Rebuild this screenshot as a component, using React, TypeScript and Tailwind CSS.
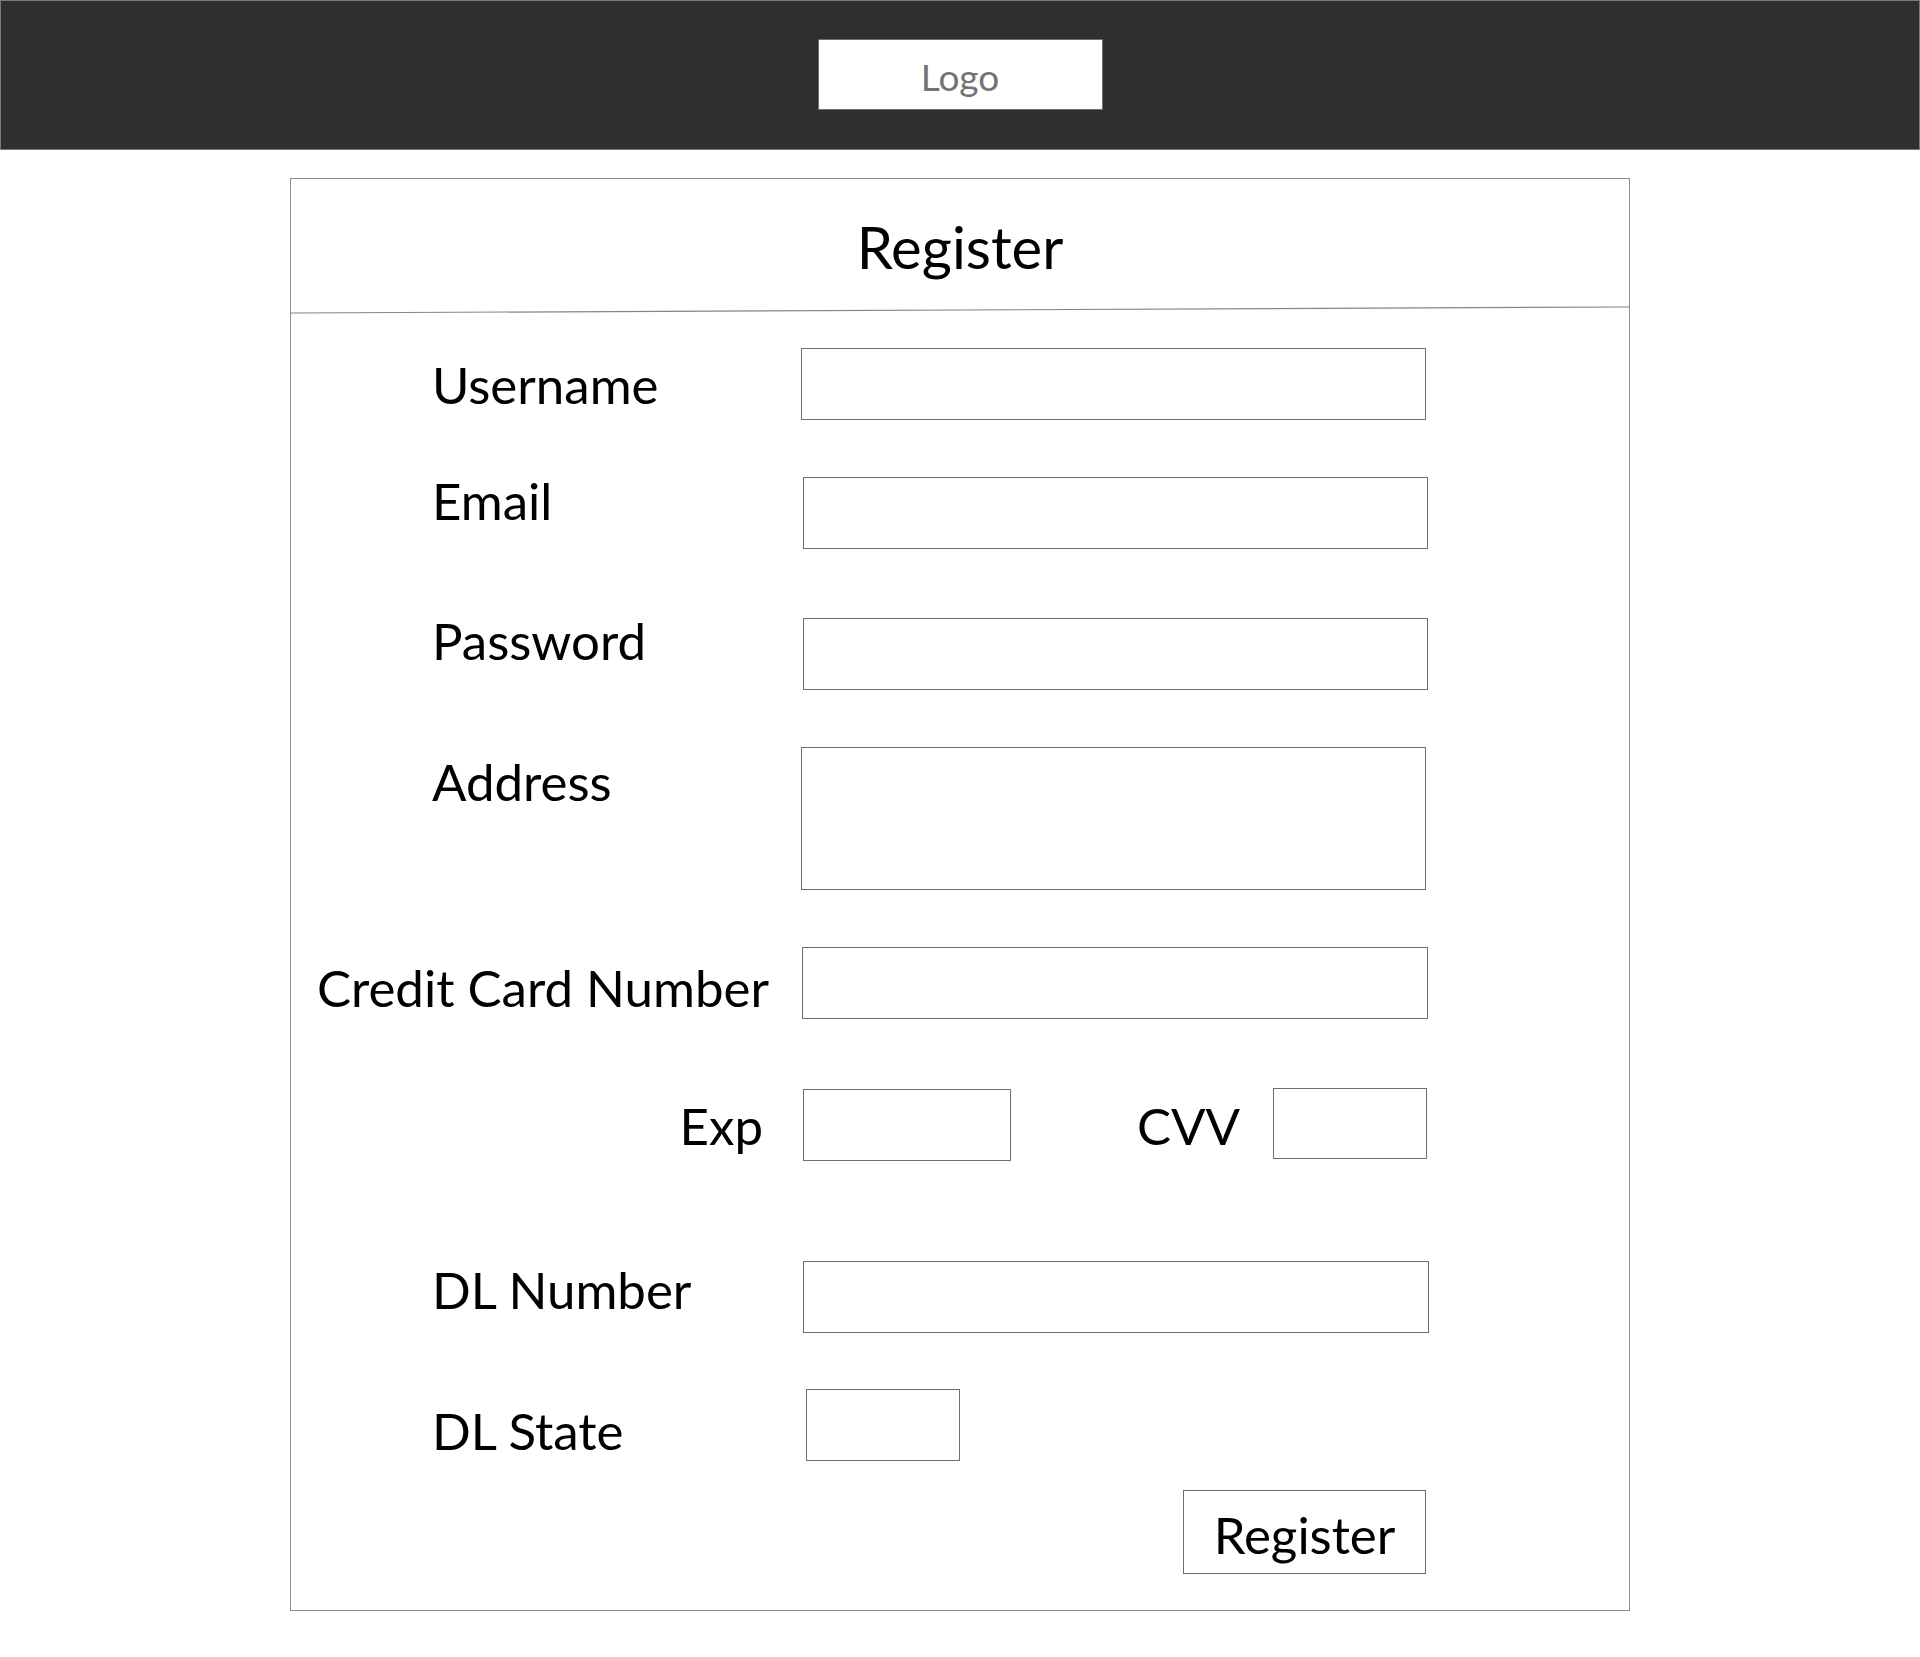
import React from 'react';

const labelCls = 'text-[51px] leading-none text-black whitespace-nowrap';
const boxCls = 'block border border-[#6e6e6e] bg-white outline-none';

export default function App() {
  return (
    <div className="min-h-screen w-full bg-white font-['Lato','Open_Sans',sans-serif]">
      {/* Top bar */}
      <header className="h-[150px] w-full bg-[#2f2f2f] border border-[#7a7a7a] flex justify-center">
        <div className="mt-[38px] w-[285px] h-[71px] bg-white border border-[#6f6f6f] flex items-center justify-center">
          <span className="pt-[3px] text-[37px] leading-none text-[#737373]">Logo</span>
        </div>
      </header>

      {/* Register card */}
      <main className="mx-auto mt-[28px] w-[1340px] border border-[#8c8c8c] pb-[36px]">
        <h1 className="mt-[39px] text-center text-[58px] leading-none text-black font-normal">Register</h1>

        <svg className="mt-[30px] block w-full h-[8px]" viewBox="0 0 1338 8" preserveAspectRatio="none">
          <line x1="0" y1="7" x2="1338" y2="1" stroke="#858585" strokeWidth="1.2" vectorEffect="non-scaling-stroke" />
        </svg>

        <form className="flex flex-col" onSubmit={(e) => e.preventDefault()}>
          {/* Username */}
          <div className="mt-[34px] flex items-start">
            <label className={`w-[510px] pl-[141px] pt-[11px] ${labelCls}`}>Username</label>
            <input type="text" className={`w-[625px] h-[72px] ${boxCls}`} />
          </div>

          {/* Email */}
          <div className="mt-[55px] flex items-start">
            <label className={`w-[510px] pl-[141px] ${labelCls}`}>Email</label>
            <input type="email" className={`mt-[2px] ml-[2px] w-[625px] h-[72px] ${boxCls}`} />
          </div>

          {/* Password */}
          <div className="mt-[66px] flex items-start">
            <label className={`w-[510px] pl-[141px] ${labelCls}`}>Password</label>
            <input type="password" className={`mt-[3px] ml-[2px] w-[625px] h-[72px] ${boxCls}`} />
          </div>

          {/* Address */}
          <div className="mt-[57px] flex items-start">
            <label className={`w-[510px] pl-[141px] pt-[9px] ${labelCls}`}>Address</label>
            <textarea className={`w-[625px] h-[143px] resize-none ${boxCls}`} />
          </div>

          {/* Credit card */}
          <div className="mt-[57px] flex items-start">
            <label className={`w-[510px] pl-[26px] pt-[15px] ${labelCls}`}>Credit Card Number</label>
            <input type="text" className={`ml-[1px] w-[626px] h-[72px] ${boxCls}`} />
          </div>

          {/* Exp / CVV */}
          <div className="mt-[69px] flex items-start">
            <label className={`w-[510px] pr-[38px] pt-[12px] text-right ${labelCls}`}>Exp</label>
            <input type="text" className={`mt-[1px] ml-[2px] w-[208px] h-[72px] ${boxCls}`} />
            <label className={`w-[262px] pl-[126px] pt-[12px] ${labelCls}`}>CVV</label>
            <input type="text" className={`w-[154px] h-[71px] ${boxCls}`} />
          </div>

          {/* DL number */}
          <div className="mt-[100px] flex items-start">
            <label className={`w-[510px] pl-[141px] pt-[3px] ${labelCls}`}>DL Number</label>
            <input type="text" className={`ml-[2px] w-[626px] h-[72px] ${boxCls}`} />
          </div>

          {/* DL state */}
          <div className="mt-[56px] flex items-start">
            <label className={`w-[510px] pl-[141px] pt-[16px] ${labelCls}`}>DL State</label>
            <input type="text" className={`ml-[5px] w-[154px] h-[72px] ${boxCls}`} />
          </div>

          <div className="mt-[29px] flex">
            <button
              type="submit"
              className="ml-[892px] w-[243px] h-[84px] pt-[4px] border border-[#6e6e6e] bg-white text-[51px] leading-none text-black flex items-center justify-center"
            >
              Register
            </button>
          </div>
        </form>
      </main>
    </div>
  );
}
